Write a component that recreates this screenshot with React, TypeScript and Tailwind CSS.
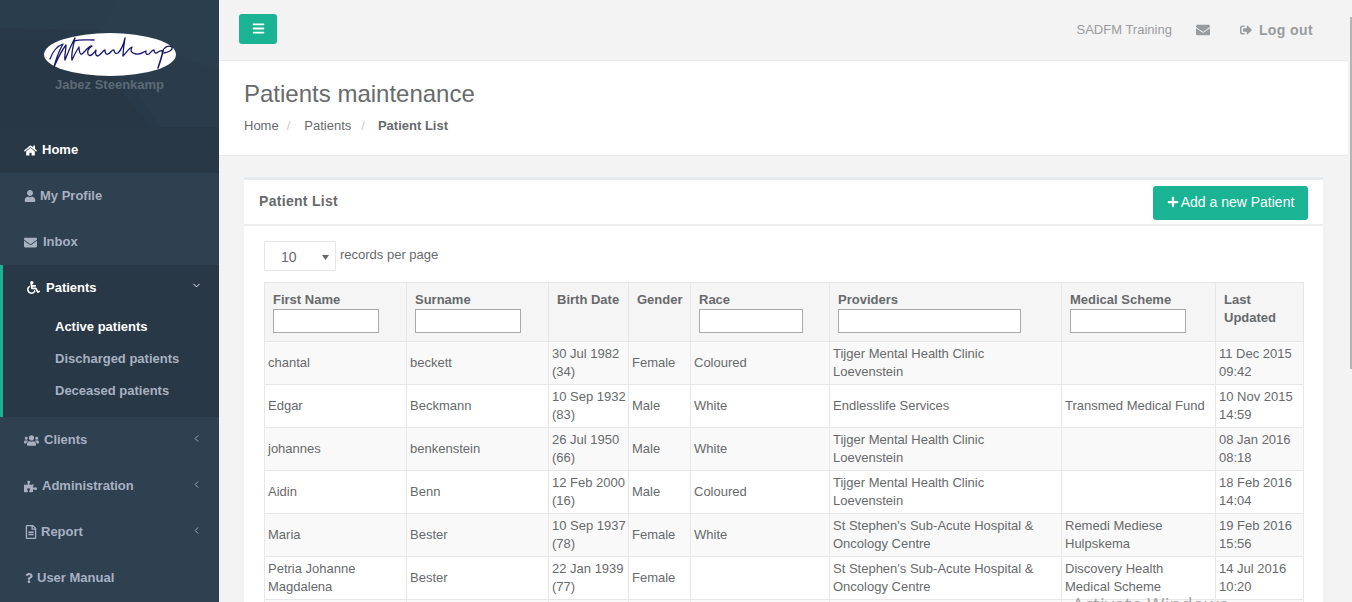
import React from "react";
import { FaHome, FaUser, FaEnvelope, FaWheelchair, FaUsers, FaPuzzlePiece, FaRegFileAlt, FaQuestion, FaSignOutAlt, FaPlus, FaBars } from "react-icons/fa";
import { ChevronDown, ChevronLeft } from "lucide-react";

function Signature() {
  return (
    <svg width="132" height="43" viewBox="0 0 132 43" className="block">
      <ellipse cx="66" cy="21.5" rx="66" ry="21.5" fill="#fff" />
      <g fill="none" stroke="#16166e" strokeWidth="1.3" strokeLinecap="round" strokeLinejoin="round">
        <path d="M6 26C9 18 13 13 19 11C15 18 12 26 10 34C13 27 18 17 22 12C22 18 20 24 21 27C24 20 27 12 31 5C29 13 27 22 28 27C30 22 33 17 35 14C35 18 36 22 38 21C41 19 45 12 48 13C45 15 43 18 44 21C46 25 50 20 52 17C51 21 52 23 54 23C57 22 59 17 61 17C61 20 62 22 64 21C67 20 68 16 70 17C70 20 72 21 74 20C77 17 80 10 81 5C80 12 79 18 79 23C82 20 85 15 88 14C86 18 87 20 92 21C96 22 99 19 102 18C101 21 103 22 105 21C107 19 108 17 110 17C110 20 112 21 114 19C116 18 118 17 119 18" />
        <path d="M119 18C118 23 116 29 114 35" strokeWidth="1.5" />
        <path d="M118 19C120 14 124 12 128 14C129 17 125 19 120 20" />
        <path d="M30 8C36 6 44 7 50 7" />
      </g>
    </svg>
  );
}

function NavItem({ icon, label, gap, arrow, active }: { icon: React.ReactNode; label: string; gap: string; arrow?: boolean; active?: boolean }) {
  return (
    <div className={`flex h-[46px] items-center pl-[24px] pr-[17px] text-[13px] font-bold ${active ? "bg-[#293846] text-white" : "text-[#a7b1c2]"}`}>
      <span className={`flex items-center ${gap}`}>{icon}<span>{label}</span></span>
      {arrow && <ChevronLeft className="ml-auto mb-[4px]" size={11} strokeWidth={2} />}
    </div>
  );
}

const columns = [142, 142, 80, 62, 139, 232, 154, 88];
const headers = [
  { label: "First Name", input: "w-[106px]" },
  { label: "Surname", input: "w-[106px]" },
  { label: "Birth Date" },
  { label: "Gender" },
  { label: "Race", input: "w-[104px]" },
  { label: "Providers", input: "w-[183px]" },
  { label: "Medical Scheme", input: "w-[116px]" },
  { label: "Last Updated" },
];

const tijger = ["Tijger Mental Health Clinic", "Loevenstein"];
const stephens = ["St Stephen's Sub-Acute Hospital &", "Oncology Centre"];
const rows: (string | string[])[][] = [
  ["chantal", "beckett", ["30 Jul 1982", "(34)"], "Female", "Coloured", tijger, "", ["11 Dec 2015", "09:42"]],
  ["Edgar", "Beckmann", ["10 Sep 1932", "(83)"], "Male", "White", "Endlesslife Services", "Transmed Medical Fund", ["10 Nov 2015", "14:59"]],
  ["johannes", "benkenstein", ["26 Jul 1950", "(66)"], "Male", "White", tijger, "", ["08 Jan 2016", "08:18"]],
  ["Aidin", "Benn", ["12 Feb 2000", "(16)"], "Male", "Coloured", tijger, "", ["18 Feb 2016", "14:04"]],
  ["Maria", "Bester", ["10 Sep 1937", "(78)"], "Female", "White", stephens, ["Remedi Mediese", "Hulpskema"], ["19 Feb 2016", "15:56"]],
  [["Petria Johanne", "Magdalena"], "Bester", ["22 Jan 1939", "(77)"], "Female", "", stephens, ["Discovery Health", "Medical Scheme"], ["14 Jul 2016", "10:20"]],
  ["", "", "", "", "", "", "", ""],
];

function Cell({ value }: { value: string | string[] }) {
  if (Array.isArray(value)) {
    return <>{value.map((v) => <div key={v} className="whitespace-nowrap">{v}</div>)}</>;
  }
  return <>{value}</>;
}

export default function App() {
  return (
    <div className="relative flex h-screen overflow-hidden bg-[#f3f3f4] font-['Liberation_Sans',Arial,sans-serif] text-[13px] text-[#676a6c]">
      <aside className="w-[219px] shrink-0 bg-[#2f4050]">
        <div className="relative h-[127px] bg-[#283a4a] overflow-hidden">
          <svg className="absolute inset-0" width="219" height="127" viewBox="0 0 219 127">
            <polygon points="0,0 219,0 219,127 160,127 100,30 0,28" fill="#2b3e4e" />
            <polygon points="0,0 118,0 100,30 0,28" fill="#2a3d4d" />
            <polygon points="100,30 160,127 219,127 219,70" fill="#2a3c4c" />
            <polygon points="0,40 80,40 150,127 0,127" fill="#273746" />
          </svg>
          <div className="relative flex flex-col items-center pt-[33px]">
            <Signature />
            <div className="text-[13px] font-bold leading-[18px] text-[#5c6a75]">Jabez Steenkamp</div>
          </div>
        </div>
        <NavItem active icon={<FaHome className="text-[13px]" />} label="Home" gap="gap-[5px]" />
        <NavItem icon={<FaUser className="text-[12px]" />} label="My Profile" gap="gap-[4px]" />
        <NavItem icon={<FaEnvelope className="text-[13px]" />} label="Inbox" gap="gap-[6px]" />
        <div className="h-[152px] border-l-[3px] border-[#1ab394] bg-[#293846]">
          <div className="flex h-[45px] items-center pl-[24px] pr-[17px] text-[13px] font-bold text-white">
            <FaWheelchair className="mr-[6px] text-[13px]" />
            <span>Patients</span>
            <ChevronDown className="ml-auto mb-[4px]" size={11} strokeWidth={2} />
          </div>
          <div className="pl-[52px] pt-px font-bold">
            <div className="flex h-[32px] items-center text-white">Active patients</div>
            <div className="flex h-[32px] items-center text-[#a7b1c2]">Discharged patients</div>
            <div className="flex h-[32px] items-center text-[#a7b1c2]">Deceased patients</div>
          </div>
        </div>
        <NavItem icon={<FaUsers className="text-[15px]" />} label="Clients" gap="gap-[5px]" arrow />
        <NavItem icon={<FaPuzzlePiece className="text-[13px]" />} label="Administration" gap="gap-[5px]" arrow />
        <NavItem icon={<FaRegFileAlt className="text-[14px]" />} label="Report" gap="gap-[3px]" arrow />
        <NavItem icon={<FaQuestion className="text-[10px]" />} label="User Manual" gap="gap-[3px]" />
      </aside>

      <main className="min-w-0 flex-1">
        <div className="mr-[4px]">
          <header className="flex h-[61px] items-center border-b border-[#e7eaec] pl-[20px] pr-[35px] pb-[3px]">
            <button className="flex h-[30px] w-[38px] items-center justify-center rounded-[3px] bg-[#1ab394] text-white">
              <FaBars className="text-[13px]" />
            </button>
            <div className="ml-auto mt-[3px] flex items-center text-[#999c9e]">
              <span className="text-[13px]">SADFM Training</span>
              <FaEnvelope className="ml-[24px] text-[14px]" />
              <FaSignOutAlt className="ml-[30px] text-[12px]" />
              <span className="ml-[7px] text-[14px] font-bold tracking-[0.4px]">Log out</span>
            </div>
          </header>
          <section className="h-[95px] border-b border-[#e7eaec] bg-white pl-[25px] pt-[19px]">
            <h1 className="text-[24px] leading-[28px] font-normal">Patients maintenance</h1>
            <nav className="mt-[9px] flex leading-[18px]">
              <span>Home</span>
              <span className="ml-[8px] mr-[14px] text-[#ccc]">/</span>
              <span>Patients</span>
              <span className="ml-[10px] mr-[13px] text-[#ccc]">/</span>
              <span className="font-bold">Patient List</span>
            </nav>
          </section>
        </div>
        <section className="ml-[25px] mr-[29px] mt-[21px] border-t-[3px] border-[#e7eaec] bg-white">
          <div className="flex h-[46px] items-start border-b-2 border-[#eeeeee] pl-[15px] pr-[15px]">
            <span className="mt-[12px] text-[14px] leading-[18px] font-bold tracking-[0.3px]">Patient List</span>
            <button className="ml-auto mt-[6px] flex h-[34px] w-[155px] items-center justify-center gap-[2px] rounded-[3px] bg-[#1ab394] pb-[2px] text-[14px] text-white">
              <FaPlus className="text-[12px]" />
              <span>Add a new Patient</span>
            </button>
          </div>
          <div className="px-[20px] pt-[15px]">
            <div className="flex items-start">
              <div className="flex h-[30px] w-[72px] items-center rounded-[1px] border border-[#e5e6e7] bg-white pl-[16px] text-[14px] pt-[2px]">
                <span>10</span>
                <svg className="ml-auto mr-[6px]" width="7" height="6" viewBox="0 0 7 6"><path d="M0 1h7L3.5 6z" fill="#666" /></svg>
              </div>
              <span className="ml-[4px] mt-[5px] leading-[18px]">records per page</span>
            </div>
            <table className="mt-[11px] w-[1039px] table-fixed border-collapse leading-[18px]">
              <colgroup>
                {columns.map((w, i) => <col key={i} style={{ width: w }} />)}
              </colgroup>
              <thead>
                <tr className="bg-[#f5f5f6]">
                  {headers.map((h) => (
                    <th key={h.label} className="h-[59px] border border-[#e7e7e7] px-[8px] pt-[8px] pb-[7px] text-left align-top font-bold">
                      <div>{h.label}</div>
                      {h.input && <input aria-label={h.label} className={`${h.input} block h-[24px] border border-[#a9a9a9] bg-white`} />}
                    </th>
                  ))}
                </tr>
              </thead>
              <tbody>
                {rows.map((r, i) => (
                  <tr key={i} className={`h-[43px] ${i % 2 === 0 ? "bg-[#f9f9f9]" : "bg-white"}`}>
                    {r.map((c, j) => (
                      <td key={j} className="border border-[#e7e7e7] p-[3px] align-middle">
                        <Cell value={c} />
                      </td>
                    ))}
                  </tr>
                ))}
              </tbody>
            </table>
          </div>
        </section>
      </main>

      <div className="absolute right-0 top-[17px] h-[352px] w-[2px] bg-[#b4b4b4]" />
      <div className="absolute left-[1072px] top-[590px] font-['Open_Sans',sans-serif] text-[19px] leading-[28px] text-[#a5a5a5]">Activate Windows</div>
    </div>
  );
}
